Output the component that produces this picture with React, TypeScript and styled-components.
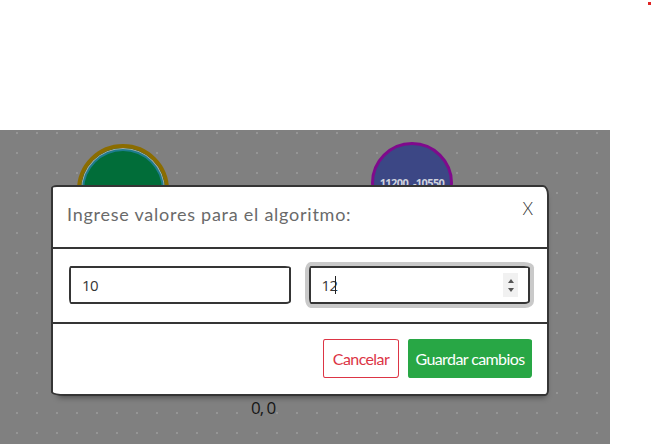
import React from "react";
import styled, { createGlobalStyle } from "styled-components";

const Global = createGlobalStyle`
  html, body { margin: 0; padding: 0; background: #ffffff; }
  body { font-family: Lato, "Open Sans", sans-serif; }
  * { box-sizing: border-box; }
`;

const Page = styled.div`
  position: relative;
  width: 652px;
  height: 444px;
  display: flex;
  flex-direction: column;
  overflow: hidden;
`;

const TopSpace = styled.div`
  height: 130px;
  flex: none;
`;

const RedMark = styled.div`
  position: absolute;
  top: 2px;
  left: 648px;
  width: 3px;
  height: 3px;
  background: #e02424;
`;

const Canvas = styled.div`
  position: relative;
  width: 610px;
  flex: 1;
  background-color: #808080;
  background-image: radial-gradient(circle, #959595 0.9px, transparent 1.2px);
  background-size: 20px 20px;
  background-position: 7px -7px;
`;

const Node = styled.div<{ $x: number; $y: number; $d: number; $ring: string; $fill: string; $w: number }>`
  position: absolute;
  left: ${(p) => p.$x - p.$d / 2}px;
  top: ${(p) => p.$y - p.$d / 2}px;
  width: ${(p) => p.$d}px;
  height: ${(p) => p.$d}px;
  border-radius: 50%;
  border: ${(p) => p.$w}px solid ${(p) => p.$ring};
  background: ${(p) => p.$fill};
  display: flex;
  align-items: center;
  justify-content: center;
`;

const GreenNode = styled(Node)`
  box-shadow: inset 0 0 0 1px #a9a9a9, inset 0 0 0 3px #1d7d8e;
`;

const NodeText = styled.span`
  font-family: "Open Sans", Lato, sans-serif;
  font-weight: 700;
  font-size: 11px;
  letter-spacing: -0.6px;
  color: #cfd2dc;
  margin-top: -2px;
`;

const CoordLabel = styled.span`
  position: absolute;
  left: 251px;
  top: 266px;
  font-family: "Open Sans", sans-serif;
  font-size: 17px;
  letter-spacing: -1px;
  color: #161616;
`;

const Dialog = styled.div`
  position: absolute;
  left: 51px;
  top: 55px;
  width: 498px;
  background: #ffffff;
  border: 2px solid #353535;
  border-radius: 6px 6px 4px 14px / 3px 10px 6px 4px;
  box-shadow: 2px 6px 6px -5px rgba(0, 0, 0, 0.45);
  display: flex;
  flex-direction: column;
`;

const Header = styled.div`
  height: 62px;
  border-bottom: 2px solid #353535;
  display: flex;
  align-items: flex-start;
  justify-content: space-between;
  padding: 16px 14px 0 14px;
`;

const Title = styled.h5`
  margin: 0;
  font-family: Lato, "Open Sans", sans-serif;
  font-weight: 400;
  font-size: 18px;
  color: #6a6a6a;
  letter-spacing: 0.75px;
`;

const Close = styled.span`
  font-family: Lato, sans-serif;
  font-weight: 300;
  font-size: 17px;
  line-height: 1;
  color: #333333;
  margin-top: -3px;
  margin-right: 0px;
`;

const Body = styled.div`
  height: 75px;
  border-bottom: 2px solid #353535;
  padding: 17px 17px 0 16px;
  display: grid;
  grid-template-columns: 1fr 1fr;
  column-gap: 18px;
  align-items: start;
`;

const Field = styled.div<{ $focused?: boolean }>`
  height: 38px;
  border: 2px solid #353535;
  border-radius: 2px 6px 5px 2px / 5px 2px 3px 6px;
  display: flex;
  align-items: center;
  padding: 0 10px 0 11px;
  font-family: "Open Sans", sans-serif;
  font-size: 15px;
  letter-spacing: -0.6px;
  color: #353535;
  box-shadow: ${(p) => (p.$focused ? "0 0 0 4px #c9c9c9" : "none")};
`;

const Value = styled.span`
  flex: 1;
  display: flex;
  align-items: center;
`;

const Caret = styled.span`
  display: inline-block;
  width: 1px;
  height: 18px;
  background: #222;
  margin-left: -2px;
`;

const Spinner = styled.div`
  width: 15px;
  height: 24px;
  background: #f1f1f1;
  display: flex;
  flex-direction: column;
  align-items: center;
  justify-content: center;
  gap: 5px;
`;

const Tri = styled.span<{ $down?: boolean }>`
  width: 0;
  height: 0;
  border-left: 3.5px solid transparent;
  border-right: 3.5px solid transparent;
  ${(p) => (p.$down ? "border-top: 4px solid #555;" : "border-bottom: 4px solid #555;")}
`;

const Footer = styled.div`
  height: 70px;
  display: flex;
  justify-content: flex-end;
  align-items: flex-start;
  gap: 9px;
  padding: 15px 15px 0 0;
`;

const Button = styled.button<{ $variant: "danger" | "success" }>`
  height: 39px;
  width: ${(p) => (p.$variant === "danger" ? 76 : 124)}px;
  padding: 0;
  font-family: Lato, sans-serif;
  font-size: 16px;
  letter-spacing: -0.6px;
  white-space: nowrap;
  display: flex;
  align-items: center;
  justify-content: center;
  cursor: pointer;
  border-radius: 2px 4px 3px 2px / 3px 2px 4px 3px;
  ${(p) =>
    p.$variant === "danger"
      ? "background: #ffffff; color: #dc3545; border: 1.5px solid #dc3545;"
      : "background: #28a745; color: #ffffff; border: 1.5px solid #28a745;"}
`;

export default function App() {
  return (
    <Page>
      <Global />
      <RedMark />
      <TopSpace />
      <Canvas>
        <GreenNode $x={123} $y={60} $d={92} $w={4} $ring="#8b6c00" $fill="#016d39">
          <NodeText>1771, 1221</NodeText>
        </GreenNode>
        <Node $x={412} $y={53} $d={82} $w={3} $ring="#7f0a8c" $fill="#3c4785">
          <NodeText>11200, -10550</NodeText>
        </Node>
        <CoordLabel>0, 0</CoordLabel>
        <Dialog>
          <Header>
            <Title>Ingrese valores para el algoritmo:</Title>
            <Close>X</Close>
          </Header>
          <Body>
            <Field>
              <Value>10</Value>
            </Field>
            <Field $focused>
              <Value>
                12<Caret />
              </Value>
              <Spinner>
                <Tri />
                <Tri $down />
              </Spinner>
            </Field>
          </Body>
          <Footer>
            <Button $variant="danger">Cancelar</Button>
            <Button $variant="success">Guardar cambios</Button>
          </Footer>
        </Dialog>
      </Canvas>
    </Page>
  );
}
